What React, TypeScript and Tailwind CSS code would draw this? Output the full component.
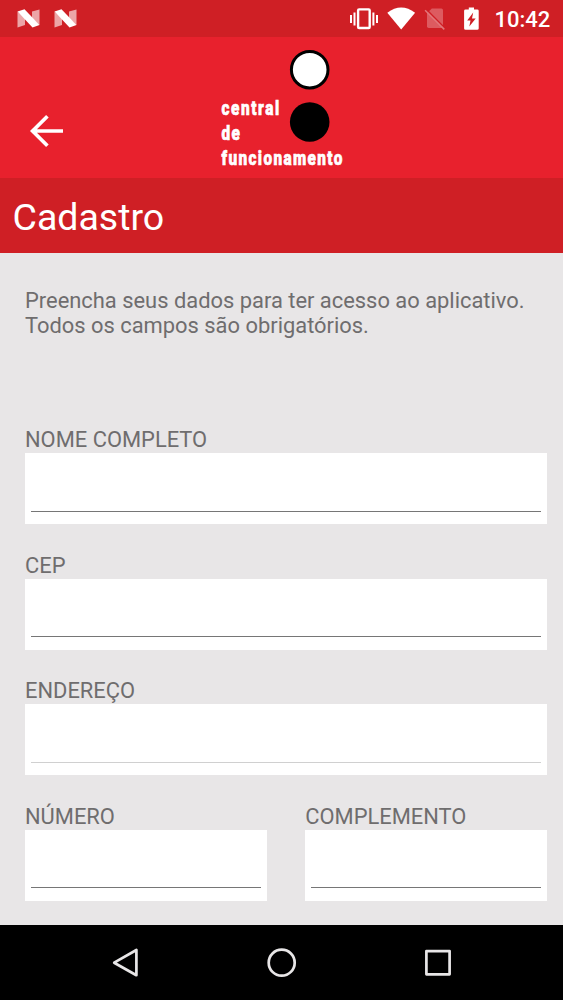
import type { ReactNode } from "react";

function NougatIcon() {
  return (
    <svg width="23" height="19" viewBox="0 0 23 19">
      <path d="M0.5 2.5 L8 9 V16 L0.5 18.5 Z M22.5 0.5 V16 L15 9 V2.5 Z" fill="#fff" fillOpacity="0.6" />
      <path d="M0.5 2.5 L7.5 0.3 L22.5 16 L15.5 18.5 Z" fill="#fff" />
    </svg>
  );
}

function StatusBar() {
  return (
    <div className="flex h-[37px] shrink-0 items-center bg-[#cf1f25] text-white">
      <div className="flex flex-1 gap-[14.5px] pl-[16.5px]">
        <NougatIcon />
        <NougatIcon />
      </div>
      <svg className="shrink-0" width="134" height="37" viewBox="350 0 134 37">
        <g fill="none" stroke="#fff" strokeWidth="2.4">
          <rect x="358.1" y="9.4" width="11.6" height="18.6" rx="1" />
          <path d="M351 15V23 M354.5 12.5V25.5 M373.4 12.5V25.5 M377 15V23" strokeWidth="2" />
        </g>
        <path d="M387.3 12.8 Q401.2 2 415.1 12.8 L401.2 29.5 Z" fill="#fff" />
        <path d="M431.8 8.5 H441.3 Q443 8.5 443 10.2 V26.3 Q443 28 441.3 28 H428.7 Q427 28 427 26.3 V13.3 Z" fill="#dd5b60" />
        <path d="M426.2 9.2 L445 28.4" stroke="#cf1f25" strokeWidth="1.6" />
        <path d="M425.1 10.2 L444.3 29.4" stroke="#e2777b" strokeWidth="1.5" />
        <path d="M465.6 9.4 H468.8 V7.4 H474 V9.4 H477.2 Q478.7 9.4 478.7 10.8 V28.4 Q478.7 29.8 477.2 29.8 H465.6 Q464.1 29.8 464.1 28.4 V10.8 Q464.1 9.4 465.6 9.4 Z" fill="#fff" />
        <path d="M473.2 12.6 L467.2 20.4 H470.5 L469.3 26.6 L475.7 18.6 H472 Z" fill="#cf1f25" />
      </svg>
      <span className="w-[79px] pt-[3px] pl-[10.5px] text-[22px] leading-[26px] font-medium">10:42</span>
    </div>
  );
}

function Logo() {
  return (
    <svg className="overflow-visible" width="130" height="126" viewBox="219 46 130 126">
      <circle cx="309.7" cy="69.7" r="18.3" fill="#fff" stroke="#000" strokeWidth="3" />
      <circle cx="309.7" cy="122" r="19.8" fill="#000" />
      <g
        transform="translate(221.5 0) scale(0.77 1)"
        fill="#fff"
        stroke="#fff"
        strokeWidth="0.6"
        fontFamily="Roboto, sans-serif"
        fontWeight="900"
        fontSize="20"
      >
        <text x="0" y="115" textLength="75">central</text>
        <text x="0" y="140" textLength="24">de</text>
        <text x="0" y="165" textLength="157">funcionamento</text>
      </g>
    </svg>
  );
}

function Header() {
  return (
    <header className="flex h-[141px] shrink-0 items-start bg-[#e8212d]">
      <button className="mt-[77px] ml-[29px] w-[190px]" aria-label="Voltar">
        <svg width="36" height="34" viewBox="29 114 36 34" fill="none" stroke="#fff" strokeWidth="3.7">
          <path d="M63 131H33.5 M47.4 116.2 L32.6 131 L47.4 145.8" />
        </svg>
      </button>
      <div className="mt-[9px]">
        <Logo />
      </div>
    </header>
  );
}

function Field({ label, disabled = false }: { label: string; disabled?: boolean }) {
  return (
    <label className="block flex-1">
      <span className="block h-[25.75px] text-[21.9px] leading-[25px]">{label}</span>
      <span className="flex h-[71px] items-end bg-white px-[6px] pb-[12.5px]">
        <input
          disabled={disabled}
          className={`block h-11 w-full min-w-0 border-b-[1.5px] outline-none ${disabled ? "border-[#d0d0d0]" : "border-[#767676]"}`}
        />
      </span>
    </label>
  );
}

function NavButton({ label, children }: { label: string; children: ReactNode }) {
  return (
    <button className="h-[30px] w-[30px]" aria-label={label}>
      <svg width="30" height="30" viewBox="0 0 30 30" fill="none" stroke="#e8e6e7" strokeWidth="2.7" strokeLinejoin="round">
        {children}
      </svg>
    </button>
  );
}

export default function App() {
  return (
    <div className="flex h-[1000px] w-[563px] flex-col overflow-hidden bg-[#e8e6e7] font-[Roboto,sans-serif]">
      <StatusBar />
      <Header />
      <h1 className="h-[75px] shrink-0 bg-[#cf1f25] pt-[17px] pl-[12.5px] text-[37.5px] leading-[44px] text-white">Cadastro</h1>
      <main className="flex flex-1 flex-col pt-[34.5px] pr-[16px] pl-[25px] text-[#6f6d6e]">
        <p className="h-[139.75px] text-[21.9px] leading-[25.7px]">
          Preencha seus dados para ter acesso ao aplicativo.
          <br />
          Todos os campos são obrigatórios.
        </p>
        <div className="flex flex-col gap-[28.75px]">
          <Field label="NOME COMPLETO" />
          <Field label="CEP" />
          <Field label="ENDEREÇO" disabled />
          <div className="flex gap-[38.5px]">
            <Field label="NÚMERO" />
            <Field label="COMPLEMENTO" />
          </div>
        </div>
      </main>
      <nav className="flex h-[75px] shrink-0 items-center justify-between bg-black pr-[110px] pl-[110px]">
        <NavButton label="Voltar">
          <path d="M4.2 14.7 L26.4 2 V27.2 Z" />
        </NavButton>
        <NavButton label="Início">
          <circle cx="14.7" cy="14.7" r="13" />
        </NavButton>
        <NavButton label="Recentes">
          <rect x="3.4" y="3.1" width="23.2" height="23.2" />
        </NavButton>
      </nav>
    </div>
  );
}
